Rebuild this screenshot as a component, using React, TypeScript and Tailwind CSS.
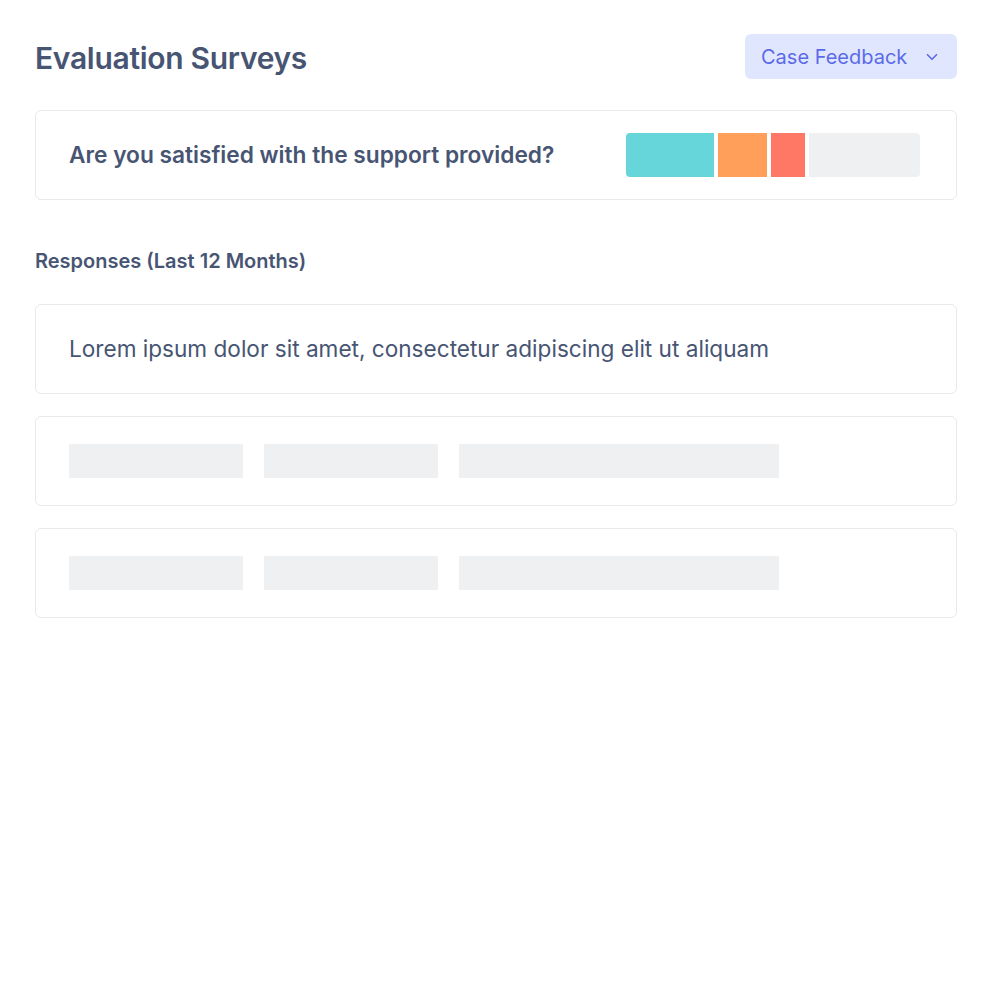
import React from 'react';
import { ChevronDown } from 'lucide-react';

const segments = [
  { w: 'w-[88px]', c: 'bg-[#66d6da] rounded-l-[4px]' },
  { w: 'w-[49px]', c: 'bg-[#ff9f59]' },
  { w: 'w-[34px]', c: 'bg-[#ff7866]' },
  { w: 'w-[111px]', c: 'bg-[#eff0f2] rounded-r-[4px]' },
];

function SkeletonRow() {
  return (
    <div className="h-[90px] rounded-md border border-[#e9eaec] bg-white px-[33px] flex items-center">
      <div className="flex gap-[21px]">
        <div className="h-[34px] w-[174px] bg-[#eff0f2]" />
        <div className="h-[34px] w-[174px] bg-[#eff0f2]" />
        <div className="h-[34px] w-[320px] bg-[#eff0f2]" />
      </div>
    </div>
  );
}

export default function App() {
  return (
    <div className="min-h-[992px] bg-white px-[35px] pt-[34px] text-[#475573]" style={{ fontFamily: 'Inter, "Noto Sans", sans-serif' }}>
      <div className="flex h-[45px] items-center justify-between">
        <h1 className="pt-[3px] text-[30px] leading-[30px] font-semibold tracking-[-0.3px]">Evaluation Surveys</h1>
        <button className="h-[45px] w-[212px] rounded-md bg-[#e0e6fd] pl-[16px] pr-[16px] flex items-center justify-between text-[20px] text-[#5b6ae8]">
          <span>Case Feedback</span>
          <ChevronDown size={18} strokeWidth={2.2} />
        </button>
      </div>

      <div className="mt-[31px] h-[90px] rounded-md border border-[#e9eaec] bg-white pl-[33px] pr-[36px] flex items-center justify-between">
        <p className="text-[22.7px] font-semibold">Are you satisfied with the support provided?</p>
        <div className="flex gap-[4px] h-[44px]">
          {segments.map((s, i) => (
            <div key={i} className={`${s.w} ${s.c} h-[44px]`} />
          ))}
        </div>
      </div>

      <h2 className="mt-[46px] text-[20px] font-semibold">Responses (Last 12 Months)</h2>

      <div className="mt-[28px] flex flex-col gap-[22px]">
        <div className="h-[90px] rounded-md border border-[#e9eaec] bg-white px-[33px] flex items-center">
          <p className="text-[22.6px]">Lorem ipsum dolor sit amet, consectetur adipiscing elit ut aliquam</p>
        </div>
        <SkeletonRow />
        <SkeletonRow />
      </div>
    </div>
  );
}
